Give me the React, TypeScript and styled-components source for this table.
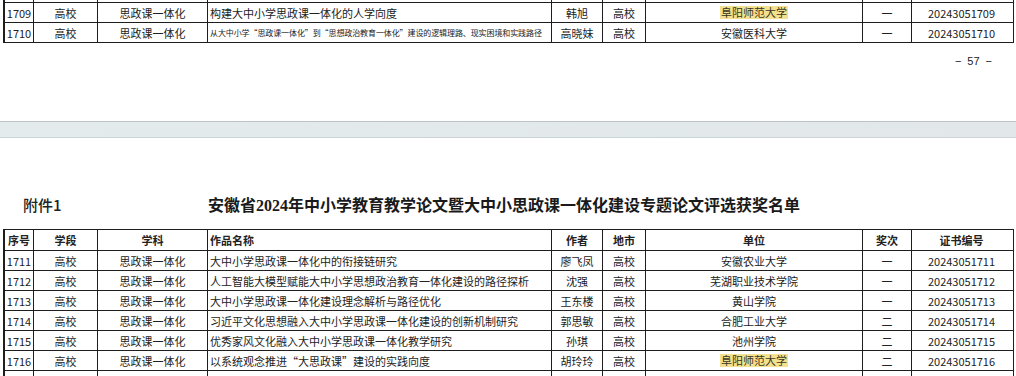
import styled, { createGlobalStyle } from "styled-components";

const GlobalStyle = createGlobalStyle`
  html, body {
    margin: 0;
    padding: 0;
    background: #ffffff;
    overflow: hidden;
  }
  body {
    font-family: "Noto Sans CJK SC", "Noto Sans", sans-serif;
    color: #222;
  }
`;

const COLUMNS = "29px 64px 110px 344px 51px 43px 217px 49px 99px";

interface Award {
  no: string;
  stage: string;
  subject: string;
  title: string;
  author: string;
  city: string;
  unit: string;
  level: string;
  cert: string;
  smallTitle?: boolean;
  marked?: boolean;
}

const topRows: Award[] = [
  {
    no: "1709",
    stage: "高校",
    subject: "思政课一体化",
    title: "构建大中小学思政课一体化的人学向度",
    author: "韩旭",
    city: "高校",
    unit: "阜阳师范大学",
    level: "一",
    cert: "20243051709",
    marked: true,
  },
  {
    no: "1710",
    stage: "高校",
    subject: "思政课一体化",
    title:
      "从大中小学“思政课一体化”到“思想政治教育一体化”建设的逻辑理路、现实困境和实践路径",
    author: "高晓妹",
    city: "高校",
    unit: "安徽医科大学",
    level: "一",
    cert: "20243051710",
    smallTitle: true,
  },
];

const bottomRows: Award[] = [
  {
    no: "1711",
    stage: "高校",
    subject: "思政课一体化",
    title: "大中小学思政课一体化中的衔接链研究",
    author: "廖飞凤",
    city: "高校",
    unit: "安徽农业大学",
    level: "一",
    cert: "20243051711",
  },
  {
    no: "1712",
    stage: "高校",
    subject: "思政课一体化",
    title: "人工智能大模型赋能大中小学思想政治教育一体化建设的路径探析",
    author: "沈强",
    city: "高校",
    unit: "芜湖职业技术学院",
    level: "一",
    cert: "20243051712",
  },
  {
    no: "1713",
    stage: "高校",
    subject: "思政课一体化",
    title: "大中小学思政课一体化建设理念解析与路径优化",
    author: "王东楼",
    city: "高校",
    unit: "黄山学院",
    level: "一",
    cert: "20243051713",
  },
  {
    no: "1714",
    stage: "高校",
    subject: "思政课一体化",
    title: "习近平文化思想融入大中小学思政课一体化建设的创新机制研究",
    author: "郭思敏",
    city: "高校",
    unit: "合肥工业大学",
    level: "二",
    cert: "20243051714",
  },
  {
    no: "1715",
    stage: "高校",
    subject: "思政课一体化",
    title: "优秀家风文化融入大中小学思政课一体化教学研究",
    author: "孙琪",
    city: "高校",
    unit: "池州学院",
    level: "二",
    cert: "20243051715",
  },
  {
    no: "1716",
    stage: "高校",
    subject: "思政课一体化",
    title: "以系统观念推进“大思政课”建设的实践向度",
    author: "胡玲玲",
    city: "高校",
    unit: "阜阳师范大学",
    level: "二",
    cert: "20243051716",
    marked: true,
  },
];

const headers = ["序号", "学段", "学科", "作品名称", "作者", "地市", "单位", "奖次", "证书编号"];

const Page = styled.div`
  width: 1016px;
  height: 376px;
  overflow: hidden;
`;

const Sheet = styled.div<{ $top?: boolean }>`
  margin-left: 3px;
  width: 1008px;
  border-left: 2px solid #1e1e1e;
  border-right: 1px solid #1e1e1e;
  border-top: ${(p) => (p.$top ? "1px solid #1e1e1e" : "none")};
`;

const Row = styled.div<{ $height: number }>`
  display: grid;
  grid-template-columns: ${COLUMNS};
  height: ${(p) => p.$height}px;
  box-sizing: border-box;
  border-bottom: 1px solid #1e1e1e;
`;

const Cell = styled.div<{ $align?: "left" | "center"; $bold?: boolean; $small?: boolean }>`
  box-sizing: border-box;
  border-right: 1px solid #1e1e1e;
  display: flex;
  align-items: center;
  justify-content: ${(p) => (p.$align === "left" ? "flex-start" : "center")};
  padding-left: ${(p) => (p.$align === "left" ? "2px" : "0")};
  font-size: ${(p) => (p.$small ? "8px" : "11px")};
  font-weight: ${(p) => (p.$bold ? 700 : 400)};
  white-space: nowrap;
  overflow: hidden;
  color: #222;
  letter-spacing: ${(p) => (p.$small ? "-0.1px" : "0")};

  &:last-child {
    border-right: none;
  }
`;

const Marked = styled.span`
  background: #f3e190;
  color: #3a3520;
  padding: 0 1px;
  line-height: 13px;
`;

const PageNumber = styled.div`
  margin-top: 11px;
  height: 14px;
  padding-right: 24px;
  display: flex;
  justify-content: flex-end;
  align-items: center;
  gap: 6px;
  font-family: "Liberation Sans", "Noto Sans CJK SC", sans-serif;
  font-size: 11px;
  color: #222;
`;

const PageBreak = styled.div`
  margin-top: 53px;
  height: 17px;
  box-sizing: border-box;
  border-top: 1px solid #bcc3c5;
  border-bottom: 1px solid #cdd4d4;
  background: linear-gradient(90deg, #e4ebec, #e2e8e9);
`;

const TitleBar = styled.div`
  margin-top: 54px;
  height: 24px;
  display: grid;
  grid-template-columns: 208px 1fr;
  align-items: center;
`;

const Attachment = styled.div`
  padding-left: 23px;
  font-size: 15px;
  font-weight: 500;
  color: #222;
`;

const Heading = styled.h1`
  margin: 0;
  font-family: "Liberation Serif", "Noto Sans CJK SC", serif;
  font-size: 16px;
  font-weight: 700;
  color: #1a1a1a;
  white-space: nowrap;
`;

const Spacer = styled.div`
  height: 13px;
`;

const AwardRow = ({ r }: { r: Award }) => (
  <Row $height={20}>
    <Cell>{r.no}</Cell>
    <Cell>{r.stage}</Cell>
    <Cell>{r.subject}</Cell>
    <Cell $align="left" $small={r.smallTitle}>
      {r.title}
    </Cell>
    <Cell>{r.author}</Cell>
    <Cell>{r.city}</Cell>
    <Cell>{r.marked ? <Marked>{r.unit}</Marked> : r.unit}</Cell>
    <Cell>{r.level}</Cell>
    <Cell>{r.cert}</Cell>
  </Row>
);

const EmptyRow = ({ height }: { height: number }) => (
  <Row $height={height}>
    {headers.map((h) => (
      <Cell key={h} />
    ))}
  </Row>
);

export default function App() {
  return (
    <Page>
      <GlobalStyle />
      <Sheet>
        <EmptyRow height={3} />
        {topRows.map((r) => (
          <AwardRow key={r.no} r={r} />
        ))}
      </Sheet>
      <PageNumber>
        <span>−</span>
        <span>57</span>
        <span>−</span>
      </PageNumber>
      <PageBreak />
      <TitleBar>
        <Attachment>附件1</Attachment>
        <Heading>安徽省2024年中小学教育教学论文暨大中小思政课一体化建设专题论文评选获奖名单</Heading>
      </TitleBar>
      <Spacer />
      <Sheet $top>
        <Row $height={21}>
          {headers.map((h, i) => (
            <Cell key={h} $bold $align={i === 3 ? "left" : "center"}>
              {h}
            </Cell>
          ))}
        </Row>
        {bottomRows.map((r) => (
          <AwardRow key={r.no} r={r} />
        ))}
        <EmptyRow height={20} />
      </Sheet>
    </Page>
  );
}
